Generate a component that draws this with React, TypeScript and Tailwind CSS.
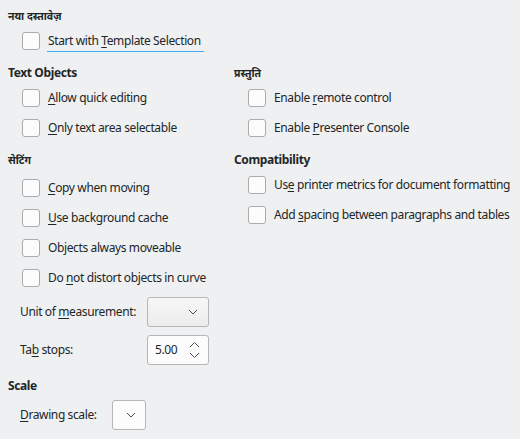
import React from "react";

const font = { fontFamily: '"Noto Sans", "DejaVu Sans", sans-serif' };

function U({ children }: { children: React.ReactNode }) {
  return <span className="underline underline-offset-[2px] decoration-[1px]">{children}</span>;
}

function Box() {
  return (
    <div className="w-[18px] h-[18px] shrink-0 rounded-[3px] border border-[#a9abad] bg-[#fcfcfc]" />
  );
}

function Check({ children, focus = false }: { children: React.ReactNode; focus?: boolean }) {
  return (
    <div className="h-[30px] flex items-center pl-[14px] gap-[8px] whitespace-nowrap">
      <Box />
      <span className={focus ? "relative" : ""}>
        {children}
        {focus && <span className="absolute left-[-1px] right-[-3px] top-[19px] h-[1px] bg-[#3daee9]" />}
      </span>
    </div>
  );
}

function Header({ children, className = "" }: { children: React.ReactNode; className?: string }) {
  return <div className={"h-[18px] leading-[18px] font-bold " + className}>{children}</div>;
}

function Chevron() {
  return (
    <svg width="10" height="6" viewBox="0 0 10 6" className="shrink-0">
      <path d="M1 1 L5 5 L9 1" fill="none" stroke="#4d4f51" strokeWidth="1" />
    </svg>
  );
}

function Combo({ w }: { w: string }) {
  return (
    <div className={"h-[30px] rounded-[3px] border border-[#b4b6b8] bg-gradient-to-b from-[#f7f7f7] to-[#ececec] flex items-center justify-end pr-[10px] " + w}>
      <Chevron />
    </div>
  );
}

const deva = "text-[10.5px] tracking-normal";

export default function App() {
  return (
    <div className="w-[520px] h-[439px] bg-[#eff0f1] text-[#232627] text-[12px] tracking-[-0.38px] overflow-hidden pt-[7px] px-[8px]" style={font}>
      <Header className={deva}>नया दस्तावेज़</Header>
      <div className="mt-[1px]">
        <Check focus>
          Start with <U>T</U>emplate Selection
        </Check>
      </div>
      <div className="mt-[8px] flex">
        <div className="w-[226px] flex flex-col">
          <Header>Text Objects</Header>
          <div className="mt-[1px]">
            <Check><U>A</U>llow quick editing</Check>
            <Check><U>O</U>nly text area selectable</Check>
          </div>
          <Header className={"mt-[8px] " + deva}>सेटिंग</Header>
          <div className="mt-[4px]">
            <Check><U>C</U>opy when moving</Check>
            <Check><U>U</U>se background cache</Check>
            <Check>Objects always moveable</Check>
            <Check>Do <U>n</U>ot distort objects in curve</Check>
          </div>
          <div className="mt-[4px] flex items-center pl-[12px] whitespace-nowrap">
            <span className="w-[127px]">Unit of <U>m</U>easurement:</span>
            <Combo w="w-[62px]" />
          </div>
          <div className="mt-[8px] flex items-center pl-[12px] whitespace-nowrap">
            <span className="w-[127px]">Ta<U>b</U> stops:</span>
            <div className="w-[62px] h-[30px] rounded-[3px] border border-[#b4b6b8] bg-[#fcfcfc] flex items-center justify-between pl-[7px] pr-[8px]">
              <span>5.00</span>
              <svg width="11" height="18" viewBox="0 0 11 18">
                <path d="M1 6 L5.5 1.5 L10 6" fill="none" stroke="#4d4f51" strokeWidth="1" />
                <path d="M1 12 L5.5 16.5 L10 12" fill="none" stroke="#4d4f51" strokeWidth="1" />
              </svg>
            </div>
          </div>
          <Header className="mt-[12px]">Scale</Header>
          <div className="mt-[5px] flex items-center pl-[12px] whitespace-nowrap">
            <span className="w-[92px]"><U>D</U>rawing scale:</span>
            <div className="w-[34px] h-[30px] rounded-[3px] border border-[#b4b6b8] bg-[#fcfcfc] flex items-center justify-end pr-[9px]">
              <Chevron />
            </div>
          </div>
        </div>
        <div className="flex-1 flex flex-col">
          <Header className={deva}>प्रस्तुति</Header>
          <div className="mt-[1px]">
            <Check>Enable <U>r</U>emote control</Check>
            <Check>Enable <U>P</U>resenter Console</Check>
          </div>
          <Header className="mt-[8px]">Compatibility</Header>
          <div className="mt-[1px]">
            <Check>Us<U>e</U> printer metrics for document formatting</Check>
            <Check>Add <U>s</U>pacing between paragraphs and tables</Check>
          </div>
        </div>
      </div>
    </div>
  );
}
